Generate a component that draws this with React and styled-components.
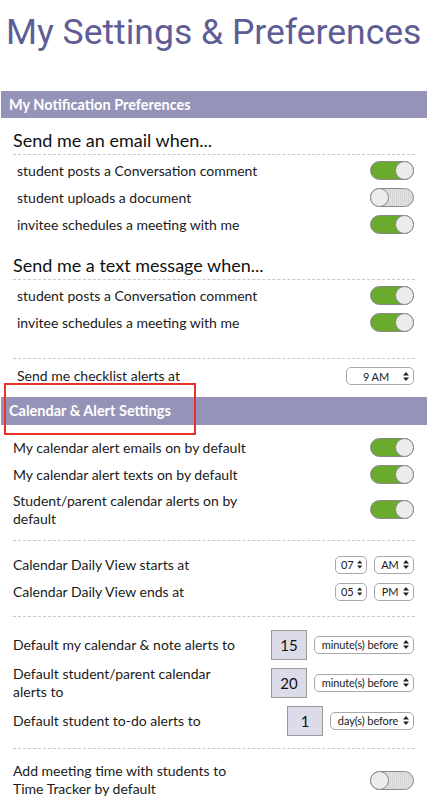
import React from "react";
import styled, { createGlobalStyle } from "styled-components";

const GlobalStyle = createGlobalStyle`
	body {
		margin: 0;
		background: #ffffff;
		font-family: Lato, "Liberation Sans", sans-serif;
		color: #1a1a1a;
	}
	* {
		box-sizing: border-box;
	}
`;

const emailPrefs = [
	{ label: "student posts a Conversation comment", on: true },
	{ label: "student uploads a document", on: false },
	{ label: "invitee schedules a meeting with me", on: true },
];

const textPrefs = [
	{ label: "student posts a Conversation comment", on: true },
	{ label: "invitee schedules a meeting with me", on: true },
];

const calendarToggles = [
	{ label: "My calendar alert emails on by default", on: true },
	{ label: "My calendar alert texts on by default", on: true },
	{ label: "Student/parent calendar alerts on by default", on: true, wrap: 240 },
];

const alertDefaults = [
	{ label: "Default my calendar & note alerts to", value: "15", unit: "minute(s) before" },
	{ label: "Default student/parent calendar alerts to", value: "20", unit: "minute(s) before", wrap: 215 },
	{ label: "Default student to-do alerts to", value: "1", unit: "day(s) before" },
];

const Arrows = () => (
	<svg width="6" height="9" viewBox="0 0 6 9">
		<path d="M3 0 L6 3.5 L0 3.5 Z M3 9 L6 5.5 L0 5.5 Z" fill="#222" />
	</svg>
);

const Toggle = ({ on }) => (
	<Switch $on={on}>
		<Knob $on={on} />
	</Switch>
);

const Select = ({ children, width }) => (
	<SelectBox $width={width}>
		<span>{children}</span>
		<Arrows />
	</SelectBox>
);

const App = () => {
	return (
		<>
			<GlobalStyle />
			<Page>
				<Title>My Settings &amp; Preferences</Title>

				<SectionBar $h={27}>My Notification Preferences</SectionBar>
				<SectionBody>
					<GroupHeading $top={12} $pad={4}>Send me an email when...</GroupHeading>
					{emailPrefs.map(p => (
						<Row key={p.label} $inset>
							<RowLabel>{p.label}</RowLabel>
							<Toggle on={p.on} />
						</Row>
					))}
					<GroupHeading $top={17} $pad={4}>Send me a text message when...</GroupHeading>
					{textPrefs.map(p => (
						<Row key={p.label} $inset>
							<RowLabel>{p.label}</RowLabel>
							<Toggle on={p.on} />
						</Row>
					))}
					<Divider $top={22} />
					<Row $inset $tall={34}>
						<RowLabel>Send me checklist alerts at</RowLabel>
						<Select width={68}>9 AM</Select>
					</Row>
					<Spacer $h={4} />
				</SectionBody>

				<SectionBar $h={28}>Calendar &amp; Alert Settings</SectionBar>
				<SectionBody>
					<Spacer $h={9} />
					{calendarToggles.map(p => (
						<Row key={p.label} $tall={p.wrap ? 43 : 27}>
							<RowLabel $max={p.wrap}>{p.label}</RowLabel>
							<Toggle on={p.on} />
						</Row>
					))}
					<Divider $top={9} />
					<Spacer $h={10} />
					<Row>
						<RowLabel>Calendar Daily View starts at</RowLabel>
						<Controls>
							<Select width={32}>07</Select>
							<Select width={40}>AM</Select>
						</Controls>
					</Row>
					<Row>
						<RowLabel>Calendar Daily View ends at</RowLabel>
						<Controls>
							<Select width={32}>05</Select>
							<Select width={40}>PM</Select>
						</Controls>
					</Row>
					<Divider $top={11} />
					<Spacer $h={10} />
					{alertDefaults.map(a => (
						<Row key={a.label} $tall={a.wrap ? 41 : 35}>
							<RowLabel $max={a.wrap}>{a.label}</RowLabel>
							<Controls $gap={7}>
								<NumberBox>{a.value}</NumberBox>
								<Select width={a.unit.startsWith("day") ? 84 : 100}>{a.unit}</Select>
							</Controls>
						</Row>
					))}
					<Divider $top={10} />
					<Spacer $h={11} />
					<Row $tall={40}>
						<RowLabel $max={235}>Add meeting time with students to Time Tracker by default</RowLabel>
						<Toggle on={false} />
					</Row>
				</SectionBody>

				<Callout />
			</Page>
		</>
	);
};

const Page = styled.div`
	position: relative;
	width: 427px;
	min-height: 801px;
	overflow: hidden;
`;

const Title = styled.h1`
	margin: 0;
	padding: 10px 0 0 6px;
	height: 91px;
	font-family: Roboto, "Liberation Sans", sans-serif;
	font-weight: 400;
	font-size: 35.5px;
	line-height: 44px;
	color: #5e5d96;
	white-space: nowrap;
`;

const SectionBar = styled.div`
	margin-left: 1px;
	height: ${({ $h }) => $h}px;
	padding-left: 8px;
	background: #9594b8;
	color: #ffffff;
	font-family: Lato, "Liberation Sans", sans-serif;
	font-weight: 700;
	font-size: 14.5px;
	line-height: ${({ $h }) => $h}px;
`;

const SectionBody = styled.div`
	padding: 0 12px 0 13px;
`;

const GroupHeading = styled.div`
	margin-top: ${({ $top }) => $top}px;
	margin-bottom: 2px;
	padding-bottom: ${({ $pad }) => $pad}px;
	border-bottom: 1px dashed #c8c8c8;
	font-size: 18px;
	line-height: 20px;
	color: #111;
`;

const Row = styled.div`
	display: flex;
	align-items: center;
	justify-content: space-between;
	min-height: ${({ $tall }) => $tall || 27}px;
	padding-left: ${({ $inset }) => ($inset ? "4px" : "0")};
`;

const RowLabel = styled.div`
	font-size: 14px;
	line-height: 18px;
	color: #1a1a1a;
	max-width: ${({ $max }) => ($max ? `${$max}px` : "none")};
`;

const Divider = styled.div`
	margin-top: ${({ $top }) => $top}px;
	border-top: 1px dashed #c8c8c8;
`;

const Spacer = styled.div`
	height: ${({ $h }) => $h}px;
`;

const Switch = styled.div`
	position: relative;
	width: 44px;
	height: 19px;
	margin-right: 1px;
	flex-shrink: 0;
	border: 1px solid #8a8a8a;
	border-radius: 10px;
	background: ${({ $on }) =>
		$on
			? "#6aab2e"
			: "repeating-linear-gradient(90deg, #e2e2e2 0 1px, #d4d4d4 1px 2px)"};
`;

const Knob = styled.div`
	position: absolute;
	top: -1px;
	${({ $on }) => ($on ? "right: -1px;" : "left: -1px;")}
	width: 19px;
	height: 19px;
	border-radius: 50%;
	border: 1px solid #8a8a8a;
	background: #ececec;
`;

const Controls = styled.div`
	display: flex;
	align-items: center;
	gap: ${({ $gap }) => $gap || 6}px;
`;

const SelectBox = styled.div`
	display: flex;
	align-items: center;
	gap: 3px;
	width: ${({ $width }) => $width}px;
	height: 18px;
	margin-right: 1px;
	padding: 0 4px 0 5px;
	border: 1px solid #a8a8a8;
	border-radius: 5px;
	background: #ffffff;
	font-size: 11px;
	color: #1a1a1a;
	white-space: nowrap;
	span {
		flex: 1;
		text-align: center;
		letter-spacing: -0.1px;
	}
`;

const NumberBox = styled.div`
	width: 36px;
	height: 30px;
	border: 1px solid #9a9a9a;
	background: #dcdbea;
	font-size: 15px;
	line-height: 28px;
	text-align: center;
	color: #111;
`;

const Callout = styled.div`
	position: absolute;
	left: 4px;
	top: 383px;
	width: 192px;
	height: 52px;
	border: 2px solid #e83228;
`;

export default App;
